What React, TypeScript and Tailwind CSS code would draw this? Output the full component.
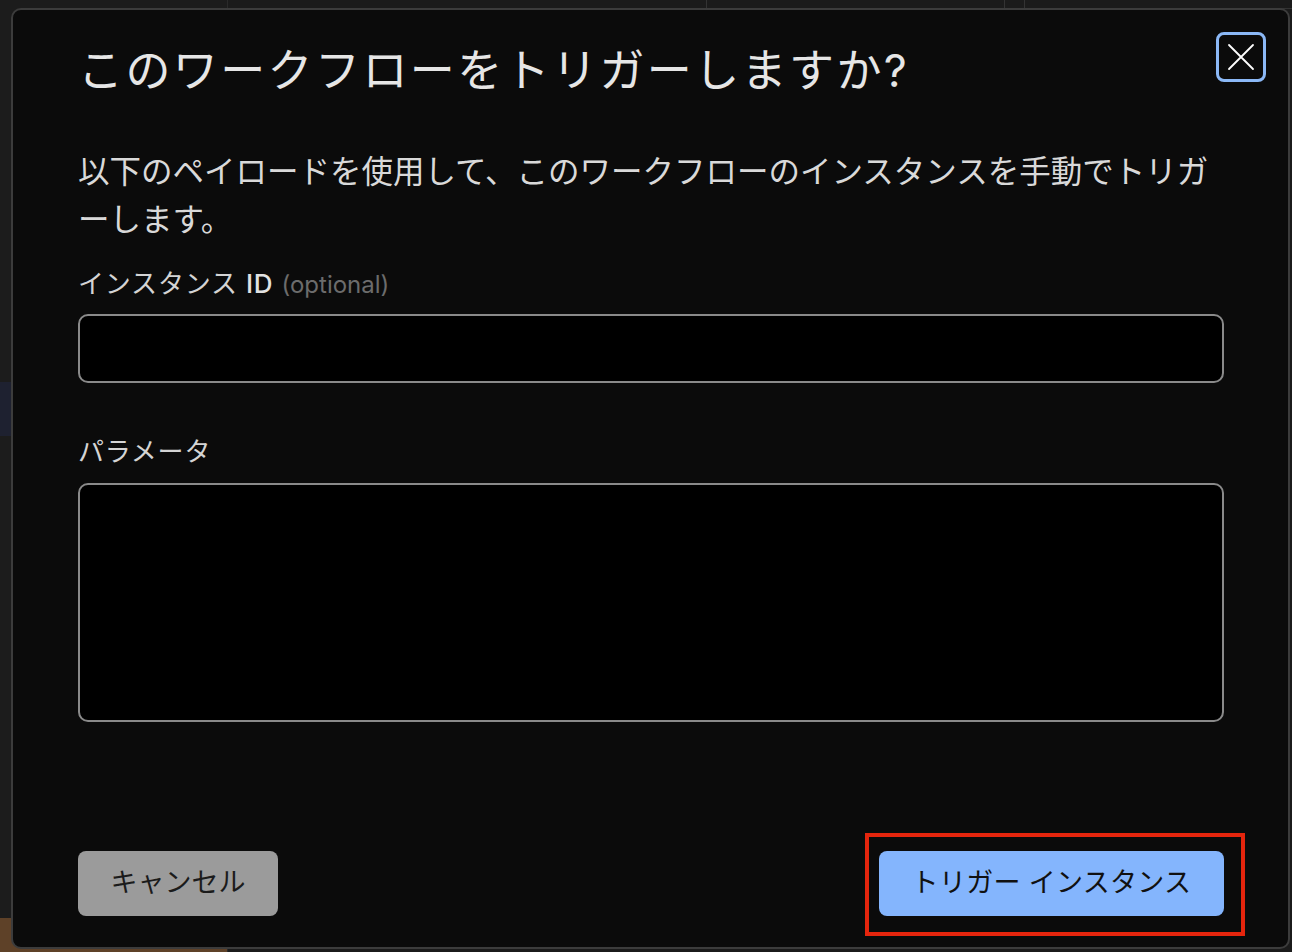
import React from 'react';

const font = "font-['Inter','Noto_Sans_CJK_JP',sans-serif]";

const CloseIcon = () => (
  <svg width="28" height="28" viewBox="0 0 28 28" fill="none" stroke="currentColor" strokeWidth="1.8" strokeLinecap="round">
    <path d="M2 2L26 26M26 2L2 26" />
  </svg>
);

const App: React.FC = () => {
  return (
    <div lang="ja" className={`relative h-[952px] w-[1292px] overflow-hidden bg-[#1b1b1b] ${font}`}>
      {/* page behind the dialog */}
      <div className="flex h-full">
        <aside className="flex w-[228px] flex-col border-r border-[#2a2a2a] bg-[#1c1c1c] pt-[112px] text-[22px] text-[#6a6a6a]">
          <div className="h-[270px]" />
          <div className="h-[54px] bg-[#1e2130]" />
          <div className="flex-1" />
          <div className="h-[34px] bg-[#5e4128]" />
        </aside>
        <div className="flex flex-1 flex-col">
          <div className="flex h-[9px] border-b border-[#333]">
            <div className="w-[479px] border-r border-[#333]" />
            <div className="w-[298px] border-r border-[#333]" />
            <div className="w-[20px] border-r border-[#333]" />
            <div className="flex-1" />
          </div>
        </div>
      </div>

      {/* dialog */}
      <div className="absolute inset-0 pl-[11px] pt-[8px]">
        <div className="relative flex h-[941px] w-[1279px] flex-col rounded-[10px] border-2 border-[#3c3c3c] bg-[#0b0b0b] pl-[65px] pr-[64px] pt-[31px] [line-break:loose]">
          <button className="absolute right-[22px] top-[22px] flex h-[50px] w-[50px] items-center justify-center rounded-[8px] border-[3px] border-[#8bb8f6] bg-[#0b0b0b] text-white">
            <CloseIcon />
          </button>

          <h2 className="text-[45px] font-normal leading-[60px] tracking-[2.4px] text-[#e6e6e6]">このワークフローをトリガーしますか?</h2>

          <p className="mt-[47px] text-[31.5px] leading-[48px] text-[#d9d9d9]">
            以下のペイロードを使用して、このワークフローのインスタンスを手動でトリガーします。
          </p>

          <label className="mt-[22px] text-[26px] leading-[36px] tracking-[0.8px] text-[#d4d4d4]">
            インスタンス <span className="font-medium text-[#e2e2e2]">ID</span>{' '}
            <span className="text-[24px] tracking-normal text-[#6c6c6c]">(optional)</span>
          </label>
          <input className="mt-[11px] h-[69px] w-full rounded-[10px] border-2 border-[#8a8a8a] bg-black px-4 text-[26px] text-white outline-none" />

          <label className="mt-[51px] text-[26px] leading-[36px] tracking-[0.8px] text-[#d4d4d4]">パラメータ</label>
          <textarea className="mt-[13px] h-[239px] w-full resize-none rounded-[10px] border-2 border-[#8a8a8a] bg-black p-4 text-[24px] text-white outline-none" />

          <div className="mt-[129px] flex items-center justify-between">
            <button className="h-[65px] w-[200px] rounded-[8px] bg-[#9b9b9b] text-[27px] text-[#1b1b1b]">キャンセル</button>
            <button className="relative h-[65px] w-[345px] rounded-[8px] bg-[#84b5fd] text-[27px] tracking-[0.3px] text-[#111]">
              トリガー インスタンス
              <span className="pointer-events-none absolute -bottom-[20px] -left-[14px] -right-[21px] -top-[18px] border-4 border-[#e5250d]" />
            </button>
          </div>
        </div>
      </div>
    </div>
  );
};

export default App;
